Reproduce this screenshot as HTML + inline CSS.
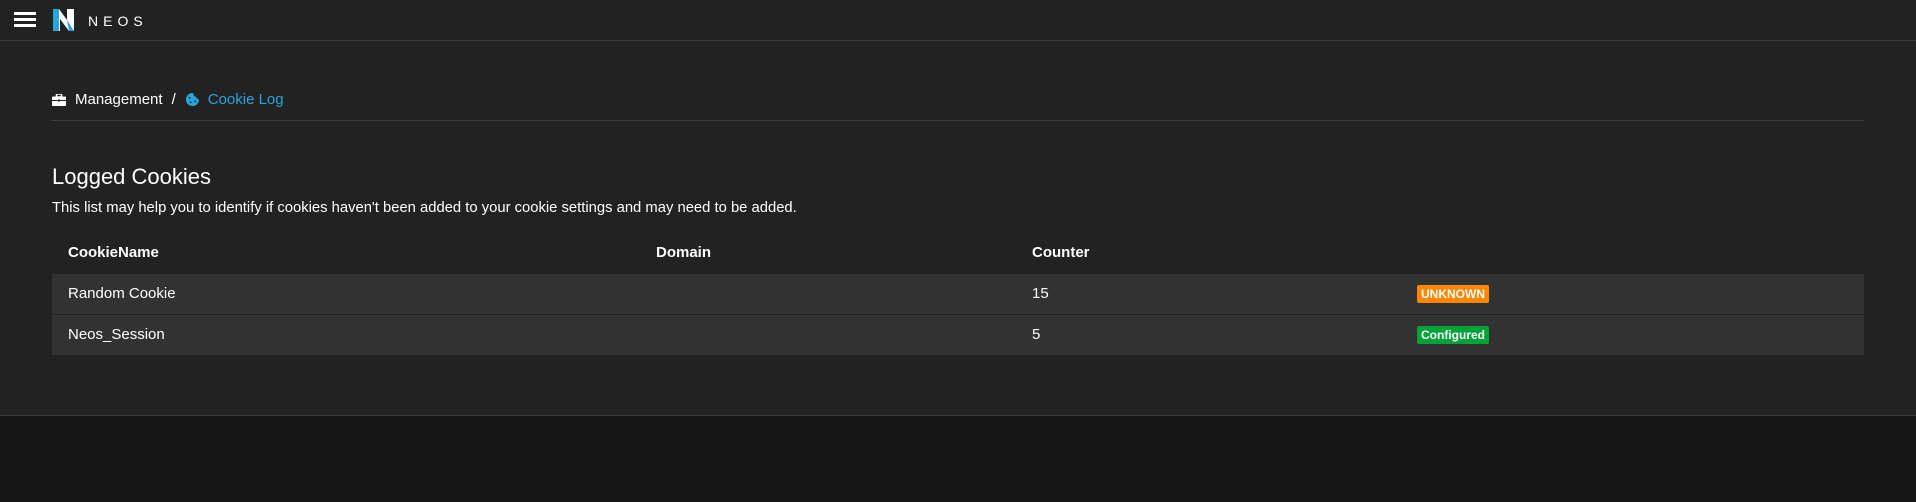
<!DOCTYPE html>
<html><head><meta charset="utf-8"><style>
*{margin:0;padding:0;box-sizing:border-box}
body{width:1916px;height:502px;background:#151515;font-family:"Liberation Sans",sans-serif;color:#fff;overflow:hidden;position:relative}
.main{position:absolute;left:0;top:0;width:1916px;height:416px;background:#222;border-bottom:1px solid #3f3f3f}
.top{position:absolute;left:0;top:0;width:1916px;height:41px;border-bottom:1px solid #3f3f3f}
.ham{position:absolute;left:14px;top:12px;width:22px;height:15px}
.ham i{display:block;height:3px;background:#fff;margin-bottom:3px}
.neos{position:absolute;left:88px;top:13px;font-size:14px;letter-spacing:5px;color:#fff}
.bc{position:absolute;left:52px;top:91px;font-size:15px;display:flex;align-items:center}
.bcline{position:absolute;left:52px;right:52px;top:120px;height:1px;background:#3f3f3f}
h1{position:absolute;left:52px;top:164px;font-size:22px;font-weight:normal}
.desc{position:absolute;left:52px;top:200px;font-size:14.8px}
.row{position:absolute;left:52px;width:1812px;height:40px;line-height:40px;font-size:15px}
.row span{position:absolute;top:0}
.bg{background:#323232}
.row span.b{top:11px;font-size:12px;font-weight:bold;padding:2px 4px;border-radius:2px;line-height:14px}
</style></head><body>
<div class="main">
<div class="top">
<div class="ham"><i></i><i></i><i></i></div>
<svg style="position:absolute;left:52px;top:8px" width="24" height="24" viewBox="0 0 24 24"><path d="M1 1h6l8 11V1h7v22h-5L8 11v12H1z" fill="#fff"/><path d="M1 23V14l6-3v12zM15 12l7 11h-5z" fill="#26a5dc"/><path d="M1 1h6v10L1 14z" fill="#26a5dc"/></svg>
<div class="neos">NEOS</div>
</div>
<div class="bc">
<svg width="14" height="12" viewBox="0 0 14 12"><rect x="4.5" y="0" width="5" height="3" fill="none" stroke="#fff" stroke-width="1.5"/><rect x="0" y="2.5" width="14" height="9.5" rx="1" fill="#fff"/><rect x="0" y="6" width="14" height="1" fill="#222"/><rect x="6" y="5.5" width="2" height="2" fill="#222"/></svg>
<span style="margin-left:9px">Management</span><span style="margin-left:9px">/</span>
<svg style="margin-left:9px" width="15" height="15" viewBox="0 0 16 16"><path d="M8 1a7 7 0 1 0 7 7 3 3 0 0 1-3-3 3 3 0 0 1-3-3 1 1 0 0 0-1-1z" fill="#26a5dc"/><circle cx="5" cy="6" r="1" fill="#222"/><circle cx="6" cy="11" r="1" fill="#222"/><circle cx="11" cy="10" r="1" fill="#222"/></svg>
<span style="margin-left:8px;color:#26a5dc">Cookie Log</span>
</div>
<div class="bcline"></div>
<h1>Logged Cookies</h1>
<div class="desc">This list may help you to identify if cookies haven't been added to your cookie settings and may need to be added.</div>
<div class="row" style="top:233px;font-weight:bold"><span style="left:16px">CookieName</span><span style="left:604px">Domain</span><span style="left:980px">Counter</span></div>
<div class="row bg" style="top:274px"><span style="left:16px">Random Cookie</span><span style="left:980px">15</span><span class="b" style="left:1365px;background:#ff8700">UNKNOWN</span></div>
<div class="row bg" style="top:315px"><span style="left:16px">Neos_Session</span><span style="left:980px">5</span><span class="b" style="left:1365px;background:#00a338">Configured</span></div>
</div>
</body></html>
